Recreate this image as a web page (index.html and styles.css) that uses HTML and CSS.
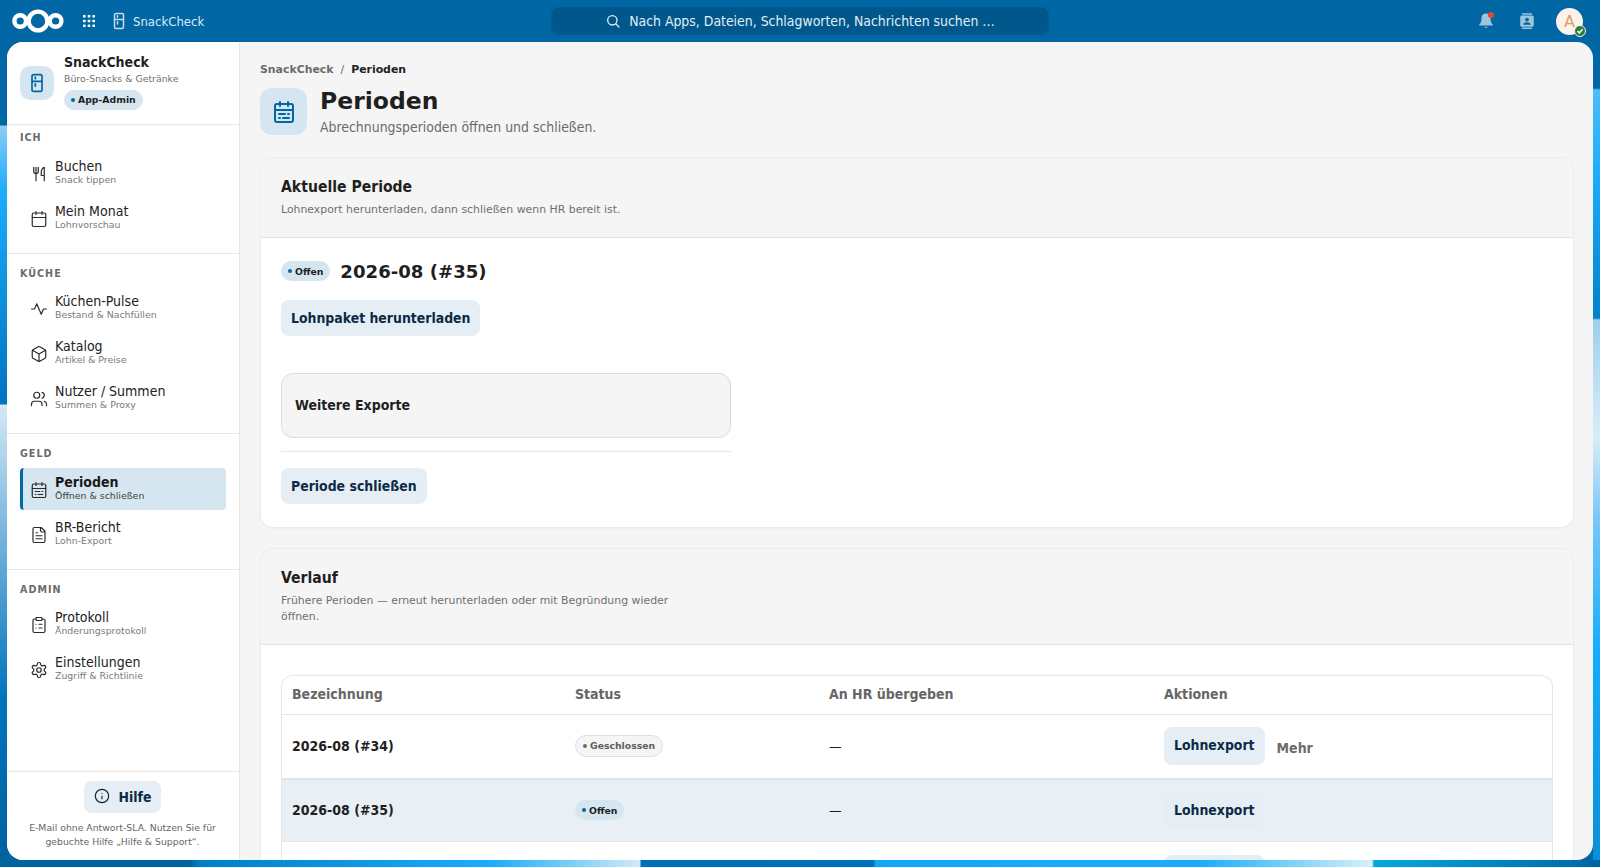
FILE: index.html
```html
<!DOCTYPE html>
<html lang="de">
<head>
  <meta charset="UTF-8">
  <meta name="viewport" content="width=device-width, initial-scale=1.0">
  <title>Perioden - SnackCheck</title>
  <link rel="stylesheet" href="styles.css">
</head>
<body>
  <header class="topbar">
    <div class="topbar-left">
      <svg class="logo" viewBox="0 0 52 24" fill="none" stroke="#fff" stroke-width="4.4">
        <circle cx="8.2" cy="12" r="5.8"/>
        <circle cx="26" cy="12" r="9.4"/>
        <circle cx="43.6" cy="12" r="5.8"/>
      </svg>
      <svg class="apps-icon" viewBox="0 0 12 12" fill="#fff">
        <rect x="0" y="0" width="2.6" height="2.6" rx=".6"/><rect x="4.7" y="0" width="2.6" height="2.6" rx=".6"/><rect x="9.4" y="0" width="2.6" height="2.6" rx=".6"/>
        <rect x="0" y="4.7" width="2.6" height="2.6" rx=".6"/><rect x="4.7" y="4.7" width="2.6" height="2.6" rx=".6"/><rect x="9.4" y="4.7" width="2.6" height="2.6" rx=".6"/>
        <rect x="0" y="9.4" width="2.6" height="2.6" rx=".6"/><rect x="4.7" y="9.4" width="2.6" height="2.6" rx=".6"/><rect x="9.4" y="9.4" width="2.6" height="2.6" rx=".6"/>
      </svg>
      <svg class="icon app-icon" viewBox="0 0 24 24"><rect x="6" y="2" width="12" height="20" rx="2"/><path d="M6 10h12M10 5v2M10 13v3"/></svg>
      <span class="app-name">SnackCheck</span>
    </div>
    <div class="search">
      <svg class="icon search-icon" viewBox="0 0 24 24"><circle cx="11" cy="11" r="7"/><path d="m21 21-4.6-4.6"/></svg>
      <span>Nach Apps, Dateien, Schlagworten, Nachrichten suchen …</span>
    </div>
    <div class="topbar-right">
      <span class="bell">
        <svg viewBox="0 0 24 24" fill="#9cc5de"><path d="M12 2c-3.600 0-6 2.800-6 6.200 0 4.800-1.200 6.600-3 8.300V18h18v-1.500c-1.800-1.700-3-3.500-3-8.300C18 4.800 15.600 2 12 2zM9.800 19.500a2.300 2.300 0 0 0 4.400 0z"/></svg>
        <i class="bell-dot"></i>
      </span>
      <svg class="contacts" viewBox="0 0 24 24" fill="#9cc5de">
        <rect x="5" y="1.500" width="14" height="2" rx="1"/>
        <rect x="5" y="20.500" width="14" height="2" rx="1"/>
        <path fill-rule="evenodd" d="M5 4.500h14a2 2 0 0 1 2 2v11a2 2 0 0 1-2 2H5a2 2 0 0 1-2-2v-11a2 2 0 0 1 2-2zm7 3a2.500 2.500 0 1 0 0 5 2.500 2.500 0 0 0 0-5zm-5 9.500h10c0-2.200-2.300-3.500-5-3.500s-5 1.300-5 3.500z"/>
      </svg>
      <div class="avatar">
        A
        <span class="avatar-status">
          <svg viewBox="0 0 12 12" fill="none" stroke="#fff" stroke-width="1.800"><path d="M3 6.200 5.200 8.300 9 4"/></svg>
        </span>
      </div>
    </div>
  </header>

  <div class="window">
    <aside class="sidebar">
      <div class="brand">
        <div class="brand-icon">
          <svg class="icon" viewBox="0 0 24 24"><rect x="6" y="2" width="12" height="20" rx="2"/><path d="M6 10h12M10 5v2M10 13v3"/></svg>
        </div>
        <div class="brand-text">
          <div class="brand-name">SnackCheck</div>
          <div class="brand-sub">Büro-Snacks &amp; Getränke</div>
          <span class="pill pill-open brand-pill"><i class="dot"></i>App-Admin</span>
        </div>
      </div>

      <nav class="nav-section nav-first">
        <div class="nav-label">Ich</div>
        <a class="nav-item">
          <svg class="icon" viewBox="0 0 24 24"><path d="M5 3v6c0 1.500 1 2.500 3 2.500S11 10.500 11 9V3M8 3v18M19 14V3c-2.500 1-4 3.500-4 7v4h4zm0 0v7"/></svg>
          <span class="nav-text"><b>Buchen</b><small>Snack tippen</small></span>
        </a>
        <a class="nav-item">
          <svg class="icon" viewBox="0 0 24 24"><rect x="3" y="4" width="18" height="18" rx="2"/><path d="M16 2v4M8 2v4M3 10h18"/></svg>
          <span class="nav-text"><b>Mein Monat</b><small>Lohnvorschau</small></span>
        </a>
      </nav>

      <nav class="nav-section">
        <div class="nav-label">Küche</div>
        <a class="nav-item">
          <svg class="icon" viewBox="0 0 24 24"><path d="M22 12h-4l-3 7L9 5l-3 7H2"/></svg>
          <span class="nav-text"><b>Küchen-Pulse</b><small>Bestand &amp; Nachfüllen</small></span>
        </a>
        <a class="nav-item">
          <svg class="icon" viewBox="0 0 24 24"><path d="M21 8a2 2 0 0 0-1-1.730l-7-4a2 2 0 0 0-2 0l-7 4A2 2 0 0 0 3 8v8a2 2 0 0 0 1 1.730l7 4a2 2 0 0 0 2 0l7-4A2 2 0 0 0 21 16ZM3.300 7 12 12l8.700-5M12 22V12"/></svg>
          <span class="nav-text"><b>Katalog</b><small>Artikel &amp; Preise</small></span>
        </a>
        <a class="nav-item">
          <svg class="icon" viewBox="0 0 24 24"><path d="M16 21v-2a4 4 0 0 0-4-4H6a4 4 0 0 0-4 4v2"/><circle cx="9" cy="7" r="4"/><path d="M22 21v-2a4 4 0 0 0-3-3.870M16 3.130a4 4 0 0 1 0 7.750"/></svg>
          <span class="nav-text"><b>Nutzer / Summen</b><small>Summen &amp; Proxy</small></span>
        </a>
      </nav>

      <nav class="nav-section">
        <div class="nav-label">Geld</div>
        <a class="nav-item active">
          <svg class="icon" viewBox="0 0 24 24"><rect x="3" y="4" width="18" height="18" rx="2"/><path d="M16 2v4M8 2v4M3 10h18M7 14h6M16 14h1M7 18h1M11 18h6"/></svg>
          <span class="nav-text"><b>Perioden</b><small>Öffnen &amp; schließen</small></span>
        </a>
        <a class="nav-item">
          <svg class="icon" viewBox="0 0 24 24"><path d="M15 2H6a2 2 0 0 0-2 2v16a2 2 0 0 0 2 2h12a2 2 0 0 0 2-2V7ZM14 2v4a2 2 0 0 0 2 2h4M10 9H8M16 13H8M16 17H8"/></svg>
          <span class="nav-text"><b>BR-Bericht</b><small>Lohn-Export</small></span>
        </a>
      </nav>

      <nav class="nav-section nav-last">
        <div class="nav-label">Admin</div>
        <a class="nav-item">
          <svg class="icon" viewBox="0 0 24 24"><rect x="8" y="2" width="8" height="4" rx="1"/><path d="M16 4h2a2 2 0 0 1 2 2v14a2 2 0 0 1-2 2H6a2 2 0 0 1-2-2V6a2 2 0 0 1 2-2h2M12 11h4M12 16h4M8 11h.01M8 16h.01"/></svg>
          <span class="nav-text"><b>Protokoll</b><small>Änderungsprotokoll</small></span>
        </a>
        <a class="nav-item">
          <svg class="icon" viewBox="0 0 24 24"><path d="M12.220 2h-.44a2 2 0 0 0-2 2v.18a2 2 0 0 1-1 1.730l-.43.25a2 2 0 0 1-2 0l-.15-.08a2 2 0 0 0-2.730.73l-.22.38a2 2 0 0 0 .73 2.730l.15.1a2 2 0 0 1 1 1.720v.51a2 2 0 0 1-1 1.740l-.15.09a2 2 0 0 0-.73 2.730l.22.38a2 2 0 0 0 2.730.73l.15-.08a2 2 0 0 1 2 0l.43.25a2 2 0 0 1 1 1.730V20a2 2 0 0 0 2 2h.44a2 2 0 0 0 2-2v-.18a2 2 0 0 1 1-1.730l.43-.25a2 2 0 0 1 2 0l.15.08a2 2 0 0 0 2.730-.73l.22-.39a2 2 0 0 0-.73-2.730l-.15-.08a2 2 0 0 1-1-1.740v-.5a2 2 0 0 1 1-1.740l.15-.09a2 2 0 0 0 .73-2.730l-.22-.38a2 2 0 0 0-2.730-.73l-.15.08a2 2 0 0 1-2 0l-.43-.25a2 2 0 0 1-1-1.730V4a2 2 0 0 0-2-2z"/><circle cx="12" cy="12" r="3"/></svg>
          <span class="nav-text"><b>Einstellungen</b><small>Zugriff &amp; Richtlinie</small></span>
        </a>
      </nav>

      <div class="help">
        <button class="btn help-btn">
          <svg class="icon" viewBox="0 0 24 24"><circle cx="12" cy="12" r="10"/><path d="M12 16v-4M12 8h.01"/></svg>
          Hilfe
        </button>
        <p>E-Mail ohne Antwort-SLA. Nutzen Sie für gebuchte Hilfe „Hilfe &amp; Support“.</p>
      </div>
    </aside>

    <main class="content">
      <div class="breadcrumb"><span>SnackCheck</span><em>/</em><strong>Perioden</strong></div>
      <div class="page-head">
        <div class="page-icon">
          <svg class="icon" viewBox="0 0 24 24"><rect x="3" y="4" width="18" height="18" rx="2"/><path d="M16 2v4M8 2v4M3 10h18M7 14h6M16 14h1M7 18h1M11 18h6"/></svg>
        </div>
        <div>
          <h1>Perioden</h1>
          <p>Abrechnungsperioden öffnen und schließen.</p>
        </div>
      </div>

      <section class="card">
        <div class="card-head">
          <h2>Aktuelle Periode</h2>
          <p>Lohnexport herunterladen, dann schließen wenn HR bereit ist.</p>
        </div>
        <div class="card-body">
          <div class="current">
            <span class="pill pill-open"><i class="dot"></i>Offen</span>
            <h3>2026-08 (#35)</h3>
          </div>
          <button class="btn">Lohnpaket herunterladen</button>
          <div class="more-box">Weitere Exporte</div>
          <hr class="divider">
          <button class="btn">Periode schließen</button>
        </div>
      </section>

      <section class="card">
        <div class="card-head">
          <h2>Verlauf</h2>
          <p class="narrow">Frühere Perioden — erneut herunterladen oder mit Begründung wieder öffnen.</p>
        </div>
        <div class="card-body table-body">
          <div class="table-wrap">
            <table>
              <thead>
                <tr><th class="col-name">Bezeichnung</th><th class="col-status">Status</th><th class="col-hr">An HR übergeben</th><th>Aktionen</th></tr>
              </thead>
              <tbody>
                <tr class="row-closed">
                  <td class="name">2026-08 (#34)</td>
                  <td><span class="pill pill-closed"><i class="dot"></i>Geschlossen</span></td>
                  <td>—</td>
                  <td><button class="btn btn-tall">Lohnexport</button><a class="more-link">Mehr</a></td>
                </tr>
                <tr class="row-current">
                  <td class="name">2026-08 (#35)</td>
                  <td><span class="pill pill-open"><i class="dot"></i>Offen</span></td>
                  <td>—</td>
                  <td><button class="btn">Lohnexport</button></td>
                </tr>
                <tr>
                  <td></td>
                  <td></td>
                  <td></td>
                  <td><button class="btn btn-cut" aria-label="Lohnexport"></button></td>
                </tr>
              </tbody>
            </table>
          </div>
        </div>
      </section>
    </main>
  </div>
</body>
</html>
```

FILE: styles.css
```css
* {
  box-sizing: border-box;
}

html,
body {
  height: 100%;
}

body {
  margin: 0;
  display: flex;
  flex-direction: column;
  overflow: hidden;
  font-family: "DejaVu Sans", sans-serif;
  color: #1f1f1f;
  background-color: #0066a4;
  /* wallpaper only shows in the thin strips around the window */
  background-image:
    linear-gradient(to right, #00659f 0, #00659f 190px, #0080c8 200px, #18adfc 490px, #d2e9f6 640px, #0070b8 641px, #0072bb 874px, #10a8f5 875px, #18aefc 1200px, #d8f0f8 1372px, #00aadd 1374px, #0070b0 1570px, #00639f 1600px),
    linear-gradient(to bottom, #0066a4 0, #0066a4 125px, #8ccdf5 126px, #1cadfc 190px, #0073bd 404px, #d4e8f5 405px, #0073bd 700px, #00619e 867px),
    linear-gradient(to bottom, #0066a4 0, #0066a4 88px, #4dbdfa 90px, #1cadfc 172px, #0081cc 318px, #9dd0ec 320px, #d9edf8 437px, #7cc8f8 516px, #14adff 648px, #0a8fd8 867px);
  background-repeat: no-repeat;
  background-size: 100% 7px, 7px 100%, 7px 100%;
  background-position: 0 100%, 0 0, 100% 0;
}

/* the bigger text runs in the condensed cut */
.app-name,
.search,
.brand-name,
.nav-text b,
.page-head p,
.card-head h2,
.btn,
.more-box,
table,
.more-link {
  font-stretch: condensed;
}

/* top bar */

.topbar {
  flex: 0 0 42px;
  display: grid;
  grid-template-columns: 1fr 498px 1fr;
  align-items: center;
  background: #0066a4;
  color: #fff;
}

.topbar-left {
  display: flex;
  align-items: center;
  padding-left: 12px;
}

.logo {
  width: 52px;
  height: 24px;
}

.apps-icon {
  width: 12px;
  height: 12px;
  margin-left: 19px;
}

.icon {
  fill: none;
  stroke: currentColor;
  stroke-width: 2;
  stroke-linecap: round;
  stroke-linejoin: round;
}

.app-icon {
  width: 18px;
  height: 20px;
  margin-left: 15px;
  color: #c5dcec;
}

.app-name {
  margin-left: 5px;
  font-size: 13px;
  color: #dcebf5;
}

.search {
  height: 28px;
  display: flex;
  align-items: center;
  justify-content: center;
  gap: 8px;
  border-radius: 8px;
  background: #00578c;
  border: 1px solid #005a91;
  font-size: 13.900px;
  color: #e0edf5;
}

.search-icon {
  width: 16px;
  height: 16px;
}

.topbar-right {
  display: flex;
  align-items: center;
  justify-content: flex-end;
  padding-right: 17px;
}

.bell {
  position: relative;
  width: 18px;
  height: 18px;
  margin-right: 23px;
}

.bell svg {
  display: block;
  width: 18px;
  height: 18px;
}

.bell-dot {
  position: absolute;
  top: 0;
  right: 1px;
  width: 6px;
  height: 6px;
  border-radius: 50%;
  background: #e2492b;
}

.contacts {
  width: 18px;
  height: 20px;
  margin-right: 20px;
}

.avatar {
  position: relative;
  width: 27px;
  height: 27px;
  border-radius: 50%;
  background: #fbf3ea;
  color: #dc9f6e;
  font-size: 16px;
  line-height: 27px;
  text-align: center;
}

.avatar-status {
  position: absolute;
  right: -3px;
  bottom: -2px;
  width: 12px;
  height: 12px;
  border-radius: 50%;
  background: #2d7b41;
  border: 1px solid #fbf3ea;
}

.avatar-status svg {
  display: block;
  width: 10px;
  height: 10px;
}

/* window */

.window {
  flex: 1;
  min-height: 0;
  display: flex;
  margin: 0 7px 7px;
  border-radius: 16px;
  overflow: hidden;
  background: #f5f5f5;
}

/* sidebar */

.sidebar {
  flex: 0 0 233px;
  display: flex;
  flex-direction: column;
  background: #fff;
  border-right: 1px solid #e6e6e6;
}

.brand {
  flex: 0 0 83px;
  display: flex;
  align-items: center;
  gap: 10px;
  padding: 0 13px;
  border-bottom: 1px solid #e6e6e6;
}

.brand-icon {
  flex: 0 0 34px;
  height: 34px;
  display: flex;
  align-items: center;
  justify-content: center;
  border-radius: 10px;
  background: #d6e6f0;
  color: #0066a4;
}

.brand-icon svg {
  width: 20px;
  height: 20px;
}

.brand-text {
  padding-bottom: 3px;
}

.brand-name {
  font-size: 14px;
  font-weight: 700;
  line-height: 16px;
}

.brand-sub {
  margin-top: 2px;
  font-size: 9.350px;
  line-height: 14px;
  color: #707070;
}

.brand-pill {
  margin-top: 4px;
  gap: 4px;
}

.pill {
  display: inline-flex;
  align-items: center;
  gap: 3px;
  height: 20px;
  padding: 0 7px;
  border-radius: 10px;
  font-size: 9.300px;
  font-weight: 700;
  font-stretch: normal;
}

.dot {
  width: 4px;
  height: 4px;
  border-radius: 50%;
  background: #0066a4;
}

.pill-open {
  background: #d6e6f0;
  color: #1f1f1f;
}

.pill-closed {
  height: 22px;
  border-radius: 11px;
  background: #f5f5f5;
  border: 1px solid #dedede;
  color: #5c5c5c;
}

.pill-closed .dot {
  background: #6b6b6b;
}

.nav-section {
  padding: 14px 13px;
  border-bottom: 1px solid #e6e6e6;
}

.nav-first {
  padding-top: 7px;
}

.nav-last {
  border-bottom: 0;
}

.nav-label {
  height: 12px;
  margin-bottom: 7.500px;
  font-size: 9.600px;
  line-height: 12px;
  font-weight: 700;
  letter-spacing: 1px;
  text-transform: uppercase;
  color: #6b6b6b;
}

.nav-item {
  display: flex;
  align-items: center;
  height: 42px;
  margin-bottom: 3px;
  padding-left: 7px;
  border-radius: 4px;
  border-left: 3px solid transparent;
}

.nav-item:last-child {
  margin-bottom: 0;
}

.nav-item .icon {
  flex: 0 0 18px;
  width: 18px;
  height: 18px;
  margin-top: 2px;
  color: #2a2a2a;
  stroke-width: 1.600;
}

.nav-text {
  display: block;
  margin: -2px 0 0 7px;
}

.nav-text b {
  display: block;
  font-size: 14px;
  font-weight: 400;
  line-height: 16px;
  color: #222;
}

.nav-text small {
  display: block;
  font-size: 9.400px;
  line-height: 12px;
  color: #7a7a7a;
}

.nav-item.active {
  background: #d6e6f0;
  border-left-color: #0066a4;
}

.nav-item.active b {
  font-weight: 700;
  color: #1a1a1a;
}

.nav-item.active small {
  color: #444;
}

.help {
  margin-top: auto;
  padding: 9px 16px 0 15px;
  height: 89px;
  border-top: 1px solid #e6e6e6;
  text-align: center;
}

.help p {
  margin: 8px 0 0;
  font-size: 9.300px;
  line-height: 14px;
  color: #666;
}

.btn {
  display: inline-block;
  height: 36px;
  padding: 0 10px;
  border: 0;
  border-radius: 8px;
  background: #e6eef5;
  color: #0b2a45;
  font-family: inherit;
  font-size: 13.900px;
  font-weight: 700;
  vertical-align: middle;
}

.btn-tall {
  height: 38px;
  padding-bottom: 1px;
}

.btn-cut {
  width: 101px;
}

.help-btn {
  display: inline-flex;
  align-items: center;
  gap: 9px;
  height: 32px;
  padding: 0 10px;
}

.help-btn .icon {
  width: 16px;
  height: 16px;
  margin-top: -3px;
  stroke-width: 1.800;
}

/* content */

.content {
  flex: 1;
  min-width: 0;
  padding: 21px 20px 0 21px;
  overflow: hidden;
}

.breadcrumb {
  display: flex;
  gap: 7px;
  height: 14px;
  margin-left: -1px;
  font-size: 10.900px;
  line-height: 14px;
  font-weight: 700;
  color: #6b6b6b;
}

.breadcrumb em {
  font-style: normal;
  font-weight: 400;
}

.breadcrumb strong {
  color: #222;
}

.page-head {
  display: flex;
  align-items: center;
  gap: 13px;
  margin: 10px 0 22px -1px;
}

.page-icon {
  flex: 0 0 47px;
  height: 47px;
  display: flex;
  align-items: center;
  justify-content: center;
  border-radius: 12px;
  background: #d6e6f0;
  color: #0066a4;
}

.page-icon svg {
  width: 24px;
  height: 24px;
}

.page-head h1 {
  margin: 0;
  font-size: 23.500px;
  line-height: 28px;
  font-weight: 700;
}

.page-head p {
  margin: 4px 0 1px;
  font-size: 13.900px;
  line-height: 16px;
  color: #6b6b6b;
}

.card {
  margin-bottom: 22px;
  border-radius: 12px;
  background: #fff;
  box-shadow: 0 0 0 1px #ececec, 0 1px 3px rgba(0, 0, 0, 0.06);
}

.card-head {
  padding: 19px 20px 19.500px;
  border-radius: 12px 12px 0 0;
  background: #f5f5f5;
  border-bottom: 1px solid #e2e2e2;
}

.card-head h2 {
  margin: 0;
  font-size: 15.600px;
  line-height: 20px;
  font-weight: 700;
}

.card-head p {
  margin: 5px 0 0;
  font-size: 10.900px;
  line-height: 15.500px;
  color: #707070;
}

.card-head p.narrow {
  max-width: 400px;
}

.card-body {
  padding: 21px 20px 23px;
}

.table-body {
  padding-top: 30px;
}

.current {
  display: flex;
  align-items: center;
  gap: 10px;
  height: 24px;
  margin-bottom: 17px;
}

.current h3 {
  margin: 0;
  font-size: 18.100px;
  font-weight: 700;
}

.more-box {
  display: flex;
  align-items: center;
  width: 450px;
  height: 65px;
  margin-top: 37px;
  padding: 0 0 2px 13px;
  border: 1px solid #dcdcdc;
  border-radius: 12px;
  background: #f5f5f5;
  font-size: 14px;
  font-weight: 700;
}

.divider {
  width: 450px;
  margin: 13px 0 16px;
  border: 0;
  border-top: 1px solid #e6e6e6;
}

.table-wrap {
  border: 1px solid #e6e6e6;
  border-bottom: 0;
  border-radius: 12px 12px 0 0;
  overflow: hidden;
}

table {
  width: 100%;
  border-collapse: collapse;
  table-layout: fixed;
  font-size: 14px;
}

th {
  height: 39px;
  padding: 0 10px 2px;
  text-align: left;
  font-weight: 700;
  color: #666;
  border-bottom: 1px solid #e6e6e6;
}

.col-name {
  width: 283px;
}

.col-status {
  width: 254px;
}

.col-hr {
  width: 335px;
}

td {
  height: 63px;
  padding: 0 10px 1px;
  border-bottom: 1px solid #e6e6e6;
}

td.name {
  font-weight: 700;
  color: #1f1f1f;
}

.row-closed td {
  height: 64px;
  border-bottom: 2px solid #dde5ea;
}

.row-current td {
  background: #e8f0f5;
}

.more-link {
  margin-left: 12px;
  font-weight: 700;
  color: #6b6b6b;
  vertical-align: -3px;
}
```
